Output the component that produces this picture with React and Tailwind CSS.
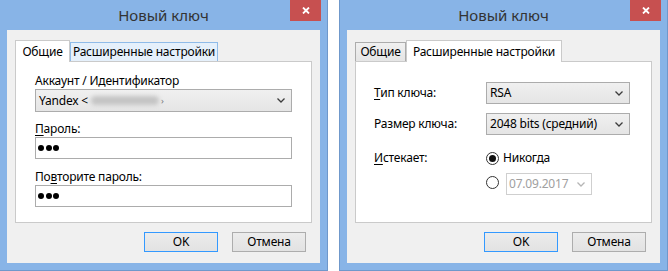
import React from 'react';

const font = "font-['Noto_Sans',sans-serif]";

const Chevron = ({ color = '#3c3c3c' }) => (
  <svg width="8" height="5" viewBox="0 0 8 5" className="shrink-0">
    <path d="M0.5 0.5 L4 4 L7.5 0.5" fill="none" stroke={color} strokeWidth="1.3" />
  </svg>
);

const Combo = ({ children, className = '' }) => (
  <div className={`flex items-center justify-between border border-[#acacac] bg-gradient-to-b from-[#f0f0f0] to-[#e5e5e5] pl-[3px] pr-[6px] ${className}`}>
    <div className="flex items-center whitespace-nowrap">{children}</div>
    <Chevron />
  </div>
);

const PasswordBox = () => (
  <div className="h-[22px] border border-[#acacac] bg-white flex items-center gap-[1.5px] pl-[2px]">
    <span className="w-[6px] h-[6px] rounded-full bg-black" />
    <span className="w-[6px] h-[6px] rounded-full bg-black" />
    <span className="w-[6px] h-[6px] rounded-full bg-black" />
  </div>
);

const Radio = ({ checked }) => (
  <span className="w-[13px] h-[13px] rounded-full border border-[#333] bg-white flex items-center justify-center shrink-0">
    {checked && <span className="w-[7px] h-[7px] rounded-full bg-[#111]" />}
  </span>
);

const Window = ({ className = '', children }) => (
  <div className={`w-[329px] h-[271px] shrink-0 bg-[#88b4e7] border-x border-b border-[#6f98cb] flex flex-col ${className}`}>
    <div className="h-[30px] relative flex items-center justify-center">
      <span className="text-[15px] text-[#333] mt-[1px] tracking-normal">Новый ключ</span>
      <div className="absolute right-[6px] top-0 w-[31px] h-[21px] bg-[#c75050] flex items-center justify-center">
        <svg width="8" height="7" viewBox="0 0 8 7">
          <path d="M1 0.5 L7 6.5 M7 0.5 L1 6.5" stroke="#fff" strokeWidth="1.8" />
        </svg>
      </div>
    </div>
    <div className="mx-[7px] mb-[7px] flex-1 bg-[#f0f0f0] px-[8px] pt-[10px] flex flex-col">
      {children}
      <div className="mt-[9px] flex justify-end gap-[14px] mr-[6px]">
        <button className="w-[74px] h-[20px] border border-[#3399ff] bg-gradient-to-b from-[#ececec] to-[#e2e2e2] leading-[18px]">OK</button>
        <button className="w-[74px] h-[20px] border border-[#adadad] bg-gradient-to-b from-[#ececec] to-[#e2e2e2] leading-[18px]">Отмена</button>
      </div>
    </div>
  </div>
);

const General = () => (
  <>
    <div className="h-[21px] flex items-end whitespace-nowrap">
      <div className="relative z-10 w-[55px] h-[22px] -mb-px bg-white border border-b-0 border-[#cacaca] flex justify-center pt-[2px]">Общие</div>
      <div className="w-[148px] h-[19px] bg-[#e5f0fb] border border-b-0 border-[#8fbbe8] flex justify-center">Расширенные настройки</div>
    </div>
    <div className="h-[162px] bg-white border border-[#cacaca] px-[19px] pt-[11px]">
      <div className="leading-[16px]">Аккаунт / Идентификатор</div>
      <Combo className="h-[23px]">
        <span>Yandex &lt;</span>
        <span className="ml-[3px] w-[68px] h-[9px] bg-[#c4c4c4] blur-[2px] rounded-full" />
        <span className="text-[#777] ml-[2px] text-[9px]">›</span>
      </Combo>
      <div className="leading-[16px] mt-[9px]"><u className="underline-offset-2">П</u>ароль:</div>
      <PasswordBox />
      <div className="leading-[16px] mt-[10px]">По<u className="underline-offset-2">в</u>торите пароль:</div>
      <PasswordBox />
    </div>
  </>
);

const Advanced = () => (
  <>
    <div className="h-[21px] flex items-end whitespace-nowrap">
      <div className="w-[51px] h-[19px] bg-gradient-to-b from-[#f0f0f0] to-[#e5e5e5] border border-b-0 border-[#acacac] flex justify-center">Общие</div>
      <div className="relative z-10 w-[156px] h-[22px] -mb-px bg-white border border-b-0 border-[#cacaca] flex justify-center pt-[2px]">Расширенные настройки</div>
    </div>
    <div className="h-[162px] bg-white border border-[#cacaca] pl-[18px] pt-[20px]">
      <div className="flex items-center">
        <div className="w-[112px]"><u className="underline-offset-2">Т</u>ип ключа:</div>
        <Combo className="w-[144px] h-[22px]"><span>RSA</span></Combo>
      </div>
      <div className="flex items-center mt-[9px]">
        <div className="w-[112px]">Размер ключа:</div>
        <Combo className="w-[144px] h-[22px]"><span>2048 bits (средний)</span></Combo>
      </div>
      <div className="flex mt-[15px]">
        <div className="w-[112px] leading-[16px]"><u className="underline-offset-2">И</u>стекает:</div>
        <div className="flex flex-col">
          <div className="h-[16px] flex items-center gap-[4px]">
            <Radio checked />
            <span>Никогда</span>
          </div>
          <div className="mt-[7px] flex items-start gap-[7px]">
            <span className="mt-[3px]"><Radio /></span>
            <div className="w-[86px] h-[22px] border border-[#cfcfcf] bg-white flex items-center justify-between pl-[2px] pr-[6px] text-[#a0a0a0]">
              <span>07.09.2017</span>
              <Chevron color="#b5b5b5" />
            </div>
          </div>
        </div>
      </div>
    </div>
  </>
);

export default function App() {
  return (
    <div className={`w-[668px] h-[271px] bg-white flex gap-[11px] overflow-hidden text-[12px] tracking-[-0.2px] text-black ${font}`}>
      <Window className="-ml-px">
        <General />
      </Window>
      <Window>
        <Advanced />
      </Window>
    </div>
  );
}
